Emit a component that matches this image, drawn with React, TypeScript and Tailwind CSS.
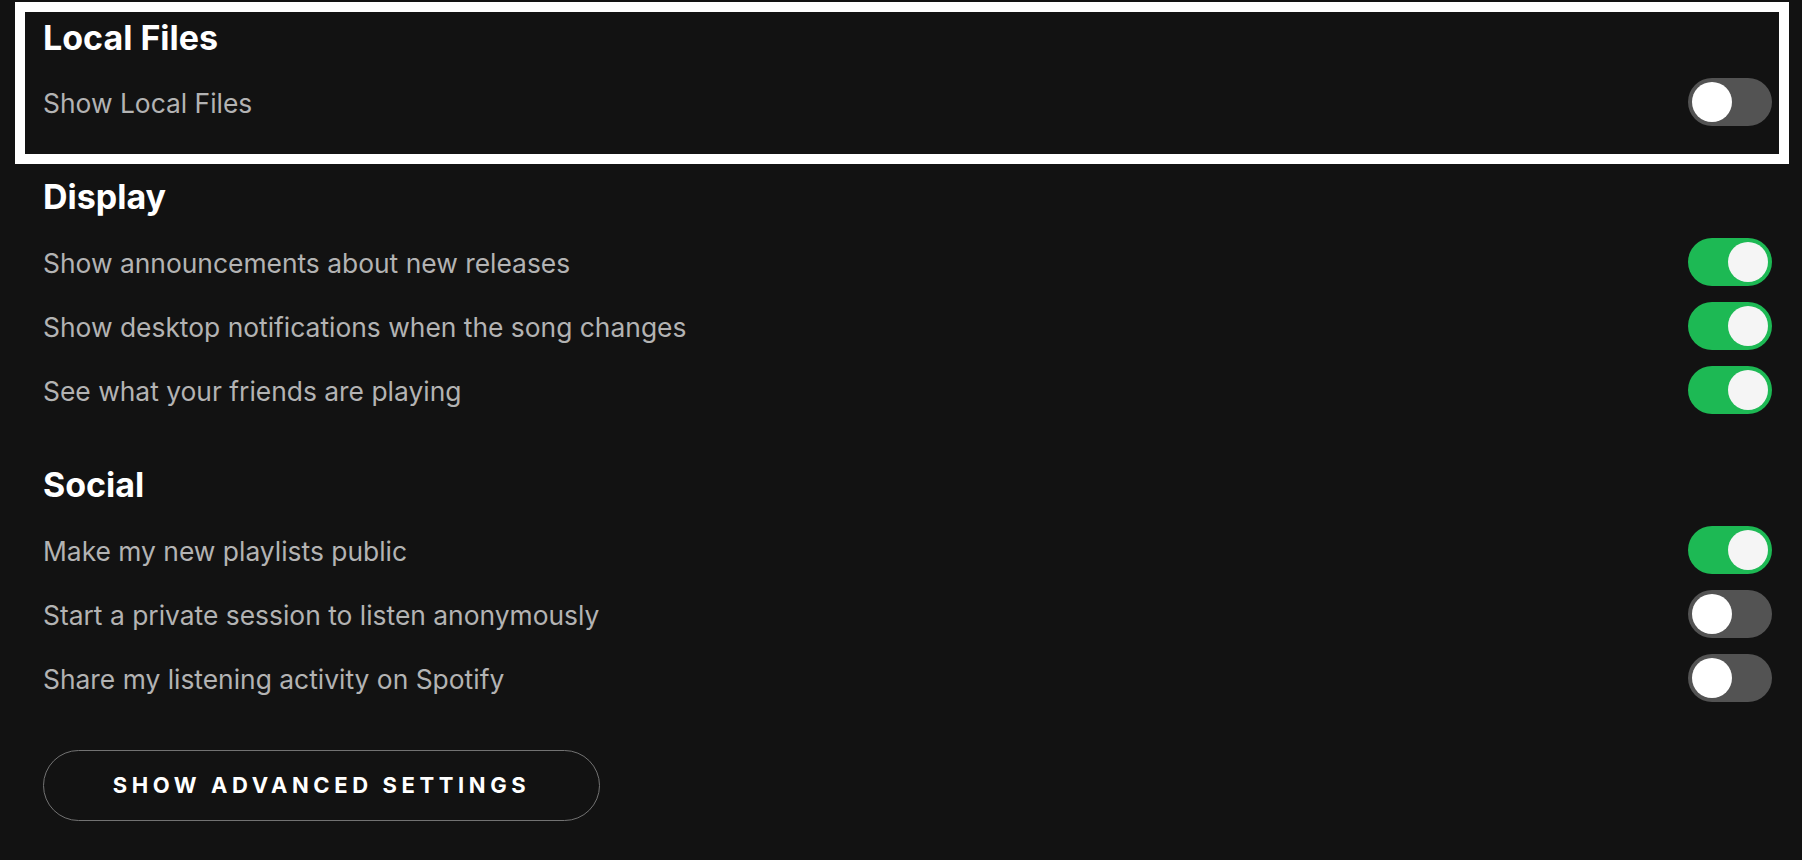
import { useState } from 'react';

type Setting = { id: string; label: string; on: boolean };

const display: Setting[] = [
  { id: 'releases', label: 'Show announcements about new releases', on: true },
  { id: 'notifications', label: 'Show desktop notifications when the song changes', on: true },
  { id: 'friends', label: 'See what your friends are playing', on: true },
];

const social: Setting[] = [
  { id: 'public', label: 'Make my new playlists public', on: true },
  { id: 'private', label: 'Start a private session to listen anonymously', on: false },
  { id: 'activity', label: 'Share my listening activity on Spotify', on: false },
];

function Toggle({ on, onChange }: { on: boolean; onChange: () => void }) {
  return (
    <button
      type="button"
      onClick={onChange}
      className={`flex h-[48px] w-[84px] shrink-0 items-center rounded-full p-[4px] ${
        on ? 'justify-end bg-[#1db954]' : 'justify-start bg-[#535353]'
      }`}
    >
      <span className={`block h-[40px] w-[40px] rounded-full ${on ? 'bg-[#f5f5f5]' : 'bg-white'}`} />
    </button>
  );
}

function Row({ label, on, onChange }: { label: string; on: boolean; onChange: () => void }) {
  return (
    <div className="flex h-[64px] items-center justify-between">
      <span className="pt-[2px] text-[26.4px] leading-[32px] text-[#b3b3b3]">{label}</span>
      <Toggle on={on} onChange={onChange} />
    </div>
  );
}

function Heading({ children }: { children: React.ReactNode }) {
  return <h2 className="h-[40px] text-[34px] font-bold leading-[40px] text-white">{children}</h2>;
}

export default function App() {
  const [localFiles, setLocalFiles] = useState(false);
  const [values, setValues] = useState<Record<string, boolean>>(() =>
    Object.fromEntries([...display, ...social].map((s) => [s.id, s.on]))
  );

  const flip = (id: string) => setValues((v) => ({ ...v, [id]: !v[id] }));

  return (
    <div
      className="min-h-[860px] bg-[#121212] pl-[43px] pr-[30px] pt-[2px]"
      style={{ fontFamily: 'Inter, "Noto Sans", sans-serif' }}
    >
      <section className="-ml-[28px] -mr-[17px] border-[10px] border-white pb-[20px] pl-[18px] pr-[7px] pt-[6px]">
        <Heading>Local Files</Heading>
        <div className="mt-[12px]">
          <Row label="Show Local Files" on={localFiles} onChange={() => setLocalFiles(!localFiles)} />
        </div>
      </section>

      <section className="mt-[13px]">
        <Heading>Display</Heading>
        <div className="mt-[13px]">
          {display.map((s) => (
            <Row key={s.id} label={s.label} on={values[s.id]} onChange={() => flip(s.id)} />
          ))}
        </div>
      </section>

      <section className="mt-[43px]">
        <Heading>Social</Heading>
        <div className="mt-[13px]">
          {social.map((s) => (
            <Row key={s.id} label={s.label} on={values[s.id]} onChange={() => flip(s.id)} />
          ))}
        </div>
      </section>

      <button
        type="button"
        className="mt-[40px] flex h-[71px] w-[557px] items-center justify-center rounded-full border border-[#727272] text-[22px] font-bold uppercase tracking-[4.6px] text-white"
      >
        Show advanced settings
      </button>
    </div>
  );
}
